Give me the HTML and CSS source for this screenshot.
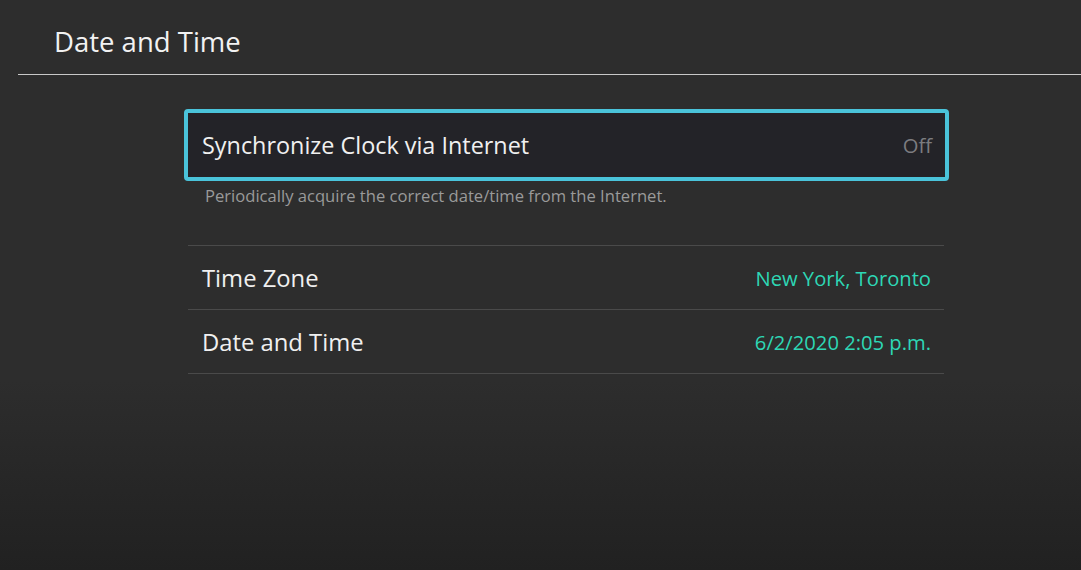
FILE: index.html
```html
<!DOCTYPE html>
<html lang="en">
<head>
  <meta charset="UTF-8" />
  <meta name="viewport" content="width=device-width, initial-scale=1.0"/>
  <title>Date and Time</title>
  <link rel="stylesheet" href="styles.css">
</head>
<body>

  <div class="header">
    <h1>Date and Time</h1>
  </div>

  <div class="settings">
    <div class="item selected">
      <span class="label">Synchronize Clock via Internet</span>
      <span class="value off">Off</span>
    </div>
    <p class="desc">Periodically acquire the correct date/time from the Internet.</p>

    <div class="list">
      <div class="item">
        <span class="label">Time Zone</span>
        <span class="value">New York, Toronto</span>
      </div>
      <div class="item">
        <span class="label">Date and Time</span>
        <span class="value">6/2/2020 2:05 p.m.</span>
      </div>
    </div>
  </div>

</body>
</html>
```

FILE: styles.css
```css
body {
  margin: 0;
  height: 570px;
  overflow: hidden;
  font-family: "Open Sans", "DejaVu Sans", sans-serif;
  background: linear-gradient(to bottom, #2d2d2d 0px, #2d2d2d 380px, #212121 570px);
  color: #f0f0f0;
}

.header {
  margin-left: 18px;
  height: 75px;
  padding-left: 36px;
  border-bottom: 1px solid #c8c8c8;
  box-sizing: border-box;
}

.header h1 {
  margin: 0;
  padding-top: 23px;
  font-size: 27.5px;
  font-weight: 400;
  line-height: 38px;
  color: #f2f2f2;
}

.settings {
  width: 756px;
  margin-left: 188px;
  padding-top: 34px;
}

.item {
  display: flex;
  align-items: center;
  justify-content: space-between;
  height: 64px;
  box-sizing: border-box;
  padding: 0 13px 0 14px;
  font-size: 23.8px;
}

.item.selected {
  margin: 0 -5px 0 -4px;
  height: 72px;
  padding: 0 13px 0 14px;
  font-size: 23.4px;
  background: #232328;
  border: 4px solid #4ac3da;
  border-radius: 4px;
}

.value {
  font-size: 20.2px;
  color: #2ed7b5;
}

.value.off {
  color: #7c7c80;
}

.desc {
  margin: 3px 0 0 17px;
  height: 61px;
  font-size: 16.6px;
  color: #9a9a9a;
}

.list {
  border-top: 1px solid #4a4a4a;
}

.list .item {
  border-bottom: 1px solid #4a4a4a;
}
```
